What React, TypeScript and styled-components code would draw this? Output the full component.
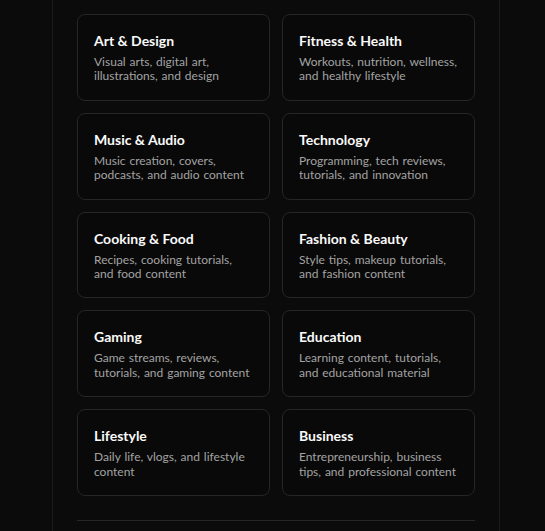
import React from "react";
import styled, { createGlobalStyle } from "styled-components";

const GlobalStyle = createGlobalStyle`
  html, body {
    margin: 0;
    padding: 0;
    background: #0b0b0b;
    height: 100%;
    overflow: hidden;
  }
  #root { height: 100%; }
  * { box-sizing: border-box; }
`;

const Page = styled.div`
  height: 100vh;
  padding-left: 52px;
  font-family: "Lato", "Noto Sans", sans-serif;
  -webkit-font-smoothing: antialiased;
`;

const Column = styled.main`
  width: 448px;
  min-height: 100%;
  border-left: 1px solid #1c1c1c;
  border-right: 1px solid #1c1c1c;
  padding: 14px 24px 0;
`;

const Grid = styled.div`
  display: grid;
  grid-template-columns: 1fr 1fr;
  gap: 12px;
  margin-bottom: 24px;
`;

const Card = styled.button`
  display: flex;
  flex-direction: column;
  align-items: flex-start;
  text-align: left;
  padding: 16px;
  border: 1px solid #262626;
  border-radius: 8px;
  background: #090909;
  font-family: inherit;
  cursor: pointer;
`;

const Title = styled.h3`
  margin: 0;
  font-size: 14px;
  line-height: 20px;
  font-weight: 700;
  color: #fafafa;
`;

const Desc = styled.p`
  margin: 4px 0 0;
  font-size: 12px;
  line-height: 14.4px;
  word-spacing: 0.8px;
  color: #a3a3a3;
`;

const Footer = styled.div`
  border-top: 1px solid #262626;
  height: 40px;
`;

const categories = [
  { title: "Art & Design", desc: "Visual arts, digital art, illustrations, and design" },
  { title: "Fitness & Health", desc: "Workouts, nutrition, wellness, and healthy lifestyle" },
  { title: "Music & Audio", desc: "Music creation, covers, podcasts, and audio content" },
  { title: "Technology", desc: "Programming, tech reviews, tutorials, and innovation" },
  { title: "Cooking & Food", desc: "Recipes, cooking tutorials, and food content" },
  { title: "Fashion & Beauty", desc: "Style tips, makeup tutorials, and fashion content" },
  { title: "Gaming", desc: "Game streams, reviews, tutorials, and gaming content" },
  { title: "Education", desc: "Learning content, tutorials, and educational material" },
  { title: "Lifestyle", desc: "Daily life, vlogs, and lifestyle content" },
  { title: "Business", desc: "Entrepreneurship, business tips, and professional content" },
];

export default function App() {
  return (
    <>
      <GlobalStyle />
      <Page>
        <Column>
          <Grid>
            {categories.map((c) => (
              <Card key={c.title} type="button">
                <Title>{c.title}</Title>
                <Desc>{c.desc}</Desc>
              </Card>
            ))}
          </Grid>
          <Footer />
        </Column>
      </Page>
    </>
  );
}
